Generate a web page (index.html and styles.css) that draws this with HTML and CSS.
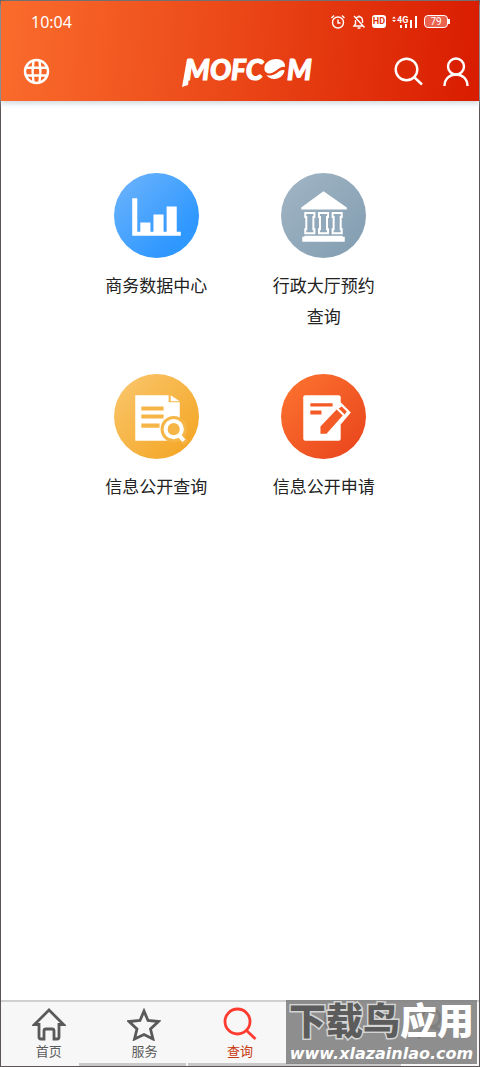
FILE: index.html
```html
<!DOCTYPE html>
<html lang="zh-CN">
<head>
<meta charset="utf-8">
<meta name="viewport" content="width=device-width, initial-scale=1">
<title>MOFCOM</title>
<link rel="stylesheet" href="styles.css">
</head>
<body>
<div class="screen">
  <header class="header">
    <div class="status">
      <time class="clock">10:04</time>
      <div class="status-icons">
        <svg width="16" height="16" viewBox="0 0 16 16" class="line"><circle cx="8" cy="8.500" r="5.500"/><path d="M8 5.500v3.500h2.500M1.500 4l2.500-2.500M14.500 4L12 1.500"/></svg>
        <svg width="14" height="16" viewBox="0 0 14 16" class="line"><path d="M4 4.500C5 3 6 2.800 7 2.800c2.500 0 3.500 2 3.500 4V9M3.500 6v4L2 12h9M5.500 14h3M7 1.500v1M2 2l10.500 11.500"/></svg>
        <span class="hd">HD</span>
        <svg width="26" height="16" viewBox="0 0 26 16" class="signal"><path d="M0 4.500l2-2 2 2zM0 6l2 2 2-2zM8 11h2v3H8zM13 10h2v4h-2zM18 6h2v8h-2zM23 2h2v12h-2z"/><text x="5" y="9">4G</text></svg>
        <span class="battery">79</span>
      </div>
    </div>
    <div class="toolbar">
      <button class="icon-btn" type="button" aria-label="语言">
        <svg width="27" height="27" viewBox="0 0 27 27" class="globe"><circle cx="13.500" cy="13.500" r="11.500"/><path d="M2 9.800h23M2 17.500h23M10.500 2.500c-1 6-1 16 0 22M16.500 2.500c1 6 1 16 0 22"/></svg>
      </button>
      <h1 class="logo">
        <svg class="logo-leg" width="9" height="28" viewBox="0 0 9 28"><path d="M5 0h4L6 26l-6 2z"/></svg>
        <span>MOFC</span>
        <svg class="logo-ball" width="24" height="22" viewBox="0 0 23 22"><path d="M1 12C0 5 6 1 13 1c6 0 9 4 8.500 8-5-1-8 4-13 6C5 16.200 2 15 1 12z"/><path d="M3 17c6 2 10-2 13-4 3-1.500 5-1 5 0-1 5-6 8-10 8-4 0-7-2-8-4z"/></svg>
        <span>M</span>
      </h1>
      <div class="actions">
        <button class="icon-btn" type="button" aria-label="搜索">
          <svg width="30" height="30" viewBox="0 0 30 30" class="stroke2"><circle cx="12.500" cy="12.500" r="10.800"/><path d="M20.500 20.500l7.500 7"/></svg>
        </button>
        <button class="icon-btn" type="button" aria-label="用户">
          <svg width="28" height="30" viewBox="0 0 28 30" class="stroke2"><circle cx="14" cy="9.500" r="8"/><path d="M2.500 29c0-7 5-11.500 11.500-11.500S25.500 22 25.500 29"/></svg>
        </button>
      </div>
    </div>
  </header>

  <main class="grid">
    <a class="tile" href="#data">
      <svg class="disc blue" viewBox="0 0 84 84"><path d="M18 25h5v33h3v-9h10v9h3V41h10v17h3V33h10v25h4v4H18z"/></svg>
      <span>商务数据中心</span>
    </a>
    <a class="tile" href="#hall">
      <svg class="disc slate" viewBox="0 0 84 84"><path d="M42 18l23 16v2H20v-2zM23 62h38v1h2v5H21v-5h2z"/><path class="columns" d="M24 39.500h9v4h-1v12h1v4h-9v-4h1v-12h-1zM37.500 39.500h9v4h-1v12h1v4h-9v-4h1v-12h-1zM51 39.500h9v4h-1v12h1v4h-9v-4h1v-12h-1z"/></svg>
      <span>行政大厅预约查询</span>
    </a>
    <a class="tile" href="#search">
      <svg class="disc amber" viewBox="0 0 84 84"><path d="M21 21h33v7h11v38H21zM56 21l9 6h-9z"/><path class="gap" d="M27 32h22v4H27zM27 40h22v4H27zM27 49h18v4H27z"/><g class="halo"><circle cx="59" cy="54.500" r="10"/><path d="M64 60l7 8"/></g><g class="lens"><circle cx="59" cy="54.500" r="8"/><path d="M64 60l5 6"/></g></svg>
      <span>信息公开查询</span>
    </a>
    <a class="tile" href="#apply">
      <svg class="disc orange" viewBox="0 0 84 84"><rect x="22" y="21" width="37" height="45" rx="2"/><path class="gap" d="M29 29h22v3H29zM29 36h11v4H29z"/><path d="M59 28l10 10-10 12-11-11z"/><path class="gap" d="M39 59v-7l16-17 6 6-16 18zM60 32l5 5-2 3-6-6z"/></svg>
      <span>信息公开申请</span>
    </a>
  </main>

  <footer class="footer">
    <nav class="tabs">
      <a class="tab" href="#home"><svg width="34" height="34" viewBox="0 0 34 34"><path d="M17 3L2.500 17.500H7V30q0 2 2 2h3v-8q0-2 2-2h6q2 0 2 2v8h3q2 0 2-2V17.500h4.500z"/></svg><span>首页</span></a>
      <a class="tab" href="#service"><svg width="34" height="34" viewBox="0 0 34 34"><path d="M17 4l4 9.500 10.500 1-8 7.500 2.500 10-9-4.500L7.500 32l2.500-10-8-7.500 11-1z"/></svg><span>服务</span></a>
      <a class="tab active" href="#query" aria-current="page"><svg width="34" height="34" viewBox="0 0 34 34"><circle cx="14.500" cy="14.500" r="12.500"/><path d="M23.500 23.500l9 8.500"/></svg><span>查询</span></a>
      <a class="tab" href="#talk" aria-label="互动"><svg width="34" height="34" viewBox="0 0 34 34"><path d="M8 4q-4 8 0 17M26 4q4 8 0 17"/></svg></a>
      <a class="tab" href="#me" aria-label="我的"><svg width="34" height="34" viewBox="0 0 34 34"><circle cx="17" cy="11" r="9"/><path d="M5 32c0-16 24-16 24 0"/></svg></a>
    </nav>
    <div class="home-bar"><i></i><i></i></div>
    <div class="watermark">
      <strong><span class="dark">下载鸟</span><span>应用</span></strong>
      <em>www.xlazainlao.com</em>
    </div>
  </footer>
</div>
</body>
</html>
```

FILE: styles.css
```css
* { box-sizing: border-box; }

body {
  margin: 0;
  font-family: "Noto Sans", "Noto Sans CJK SC", sans-serif;
  color: #222;
}

.screen {
  min-height: 100vh;
  display: flex;
  flex-direction: column;
  border: 1px solid #5b5557;
  background: #fff;
}

svg { display: block; flex: none; }

.header {
  height: 100px;
  display: flex;
  flex-direction: column;
  color: #fff;
  background: linear-gradient(95deg, #fa6c2c, #eb4818 48%, #d91c00);
  box-shadow: 0 2px 6px #c9d3da;
}

.status {
  height: 41px;
  padding: 0 31px 0 30px;
  display: flex;
  align-items: center;
  justify-content: space-between;
}

.clock { font-size: 16px; }

.status-icons { display: flex; align-items: center; gap: 6px; }

.line { fill: none; stroke: #fff; stroke-width: 1.4; }

.hd {
  padding: 0 1px;
  border-radius: 3px;
  background: #fff;
  color: #df3510;
  font: bold 9px/13px Roboto, sans-serif;
}

.signal { fill: #fff; font: bold 9px Roboto, sans-serif; }

.battery {
  position: relative;
  width: 24px;
  border: 1px solid #fff;
  border-radius: 4px;
  background: #ea6450;
  font: 10px/11px Roboto, sans-serif;
  text-align: center;
}

.battery::after {
  content: "";
  position: absolute;
  right: -3px;
  top: 3px;
  width: 2px;
  height: 5px;
  background: #fff;
}

.toolbar {
  flex: 1;
  display: grid;
  grid-template-columns: 1fr auto 1fr;
  align-items: center;
  padding: 0 9px 0 22px;
}

.icon-btn {
  display: block;
  padding: 0;
  border: 0;
  background: none;
}

.globe { fill: none; stroke: #fff; stroke-width: 2.4; }
.stroke2 { fill: none; stroke: #fff; stroke-width: 2.4; }

.logo {
  position: relative;
  margin: 0;
  padding: 0 0 6px 4px;
  display: flex;
  align-items: center;
  font: italic 900 28px/32px Lato, sans-serif;
  -webkit-text-stroke: 1px #fff;
}

.logo svg { fill: #fff; }
.logo-leg { position: absolute; left: 1px; top: 6px; }

.actions {
  display: flex;
  justify-content: flex-end;
  gap: 18px;
}

.grid {
  flex: 1;
  display: grid;
  grid-template-columns: 1fr 1fr;
  align-content: start;
  row-gap: 42px;
  padding: 72px 15% 0;
}

.tile {
  display: flex;
  flex-direction: column;
  align-items: center;
  gap: 12px;
  color: #222;
  text-decoration: none;
  text-align: center;
  font-size: 17px;
  line-height: 31px;
}

.tile span { width: 112px; }

.disc {
  width: 85px;
  height: 85px;
  border-radius: 50%;
  fill: #fff;
}

.blue { --tone: #45a2fb; background: linear-gradient(135deg, #70b5fc, #2f98ff 75%); }
.slate { --tone: #90a9bb; background: linear-gradient(135deg, #a2b6c5, #819cb0); }
.amber { --tone: #f6b647; background: linear-gradient(135deg, #fac76f, #f3a31d); }
.orange { --tone: #f45a25; background: linear-gradient(135deg, #fd7530, #e8421c); }

.gap { fill: var(--tone); }
.columns { fill: var(--tone); stroke: #fff; stroke-width: 2; }
.halo { fill: var(--tone); stroke: var(--tone); stroke-width: 6; }
.lens { fill: var(--tone); stroke: #fff; stroke-width: 4; }

.footer {
  position: relative;
  border-top: 2px solid #d0d0d0;
  background: #f7f7f7;
}

.tabs {
  display: grid;
  grid-template-columns: repeat(5, 1fr);
  height: 61px;
}

.tab {
  display: flex;
  flex-direction: column;
  align-items: center;
  padding-top: 5px;
  color: #5c5c5c;
  text-decoration: none;
  font-size: 13px;
  line-height: 20px;
}

.tab svg { fill: none; stroke: #5a5a5a; stroke-width: 2.8; }
.tab.active { color: #c73a10; }
.tab.active svg { stroke: #ff3b30; }

.home-bar {
  display: flex;
  gap: 2px;
  height: 3px;
  margin: 0 78px;
}

.home-bar i { flex: 2; background: #c9c9c9; }
.home-bar i:first-child { flex: 1; }

.watermark {
  position: absolute;
  right: 2px;
  bottom: 2px;
  width: 191px;
  height: 64px;
  padding-top: 1px;
  display: flex;
  flex-direction: column;
  align-items: center;
  background: rgb(130 130 130 / 90%);
  color: #fff;
  white-space: nowrap;
}

.watermark strong {
  font: 900 37px/43px Roboto, "Noto Sans CJK SC", sans-serif;
}

.watermark .dark {
  color: #5c5c5c;
  -webkit-text-stroke: 3px #d4d4d4;
  paint-order: stroke fill;
}

.watermark em {
  font: italic bold 16px/19px "DejaVu Sans", sans-serif;
}
```
